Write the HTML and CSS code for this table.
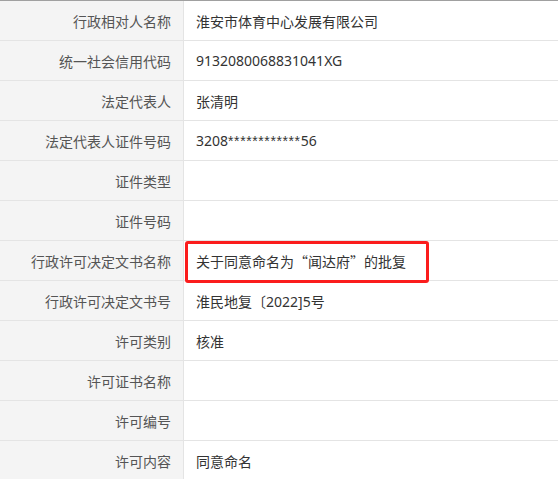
FILE: index.html
```html
<!DOCTYPE html>
<html lang="zh-CN">
<head>
<meta charset="utf-8">
<link rel="stylesheet" href="styles.css">
</head>
<body>
<div class="table">
  <div class="row"><div class="label">行政相对人名称</div><div class="value">淮安市体育中心发展有限公司</div></div>
  <div class="row"><div class="label">统一社会信用代码</div><div class="value num">9132080068831041XG</div></div>
  <div class="row"><div class="label">法定代表人</div><div class="value">张清明</div></div>
  <div class="row"><div class="label">法定代表人证件号码</div><div class="value num">3208<span class="stars">************</span>56</div></div>
  <div class="row"><div class="label">证件类型</div><div class="value"></div></div>
  <div class="row"><div class="label">证件号码</div><div class="value"></div></div>
  <div class="row"><div class="label">行政许可决定文书名称</div><div class="value">关于同意命名为“闻达府”的批复<span class="mark"></span></div></div>
  <div class="row"><div class="label">行政许可决定文书号</div><div class="value num">淮民地复〔2022]5号</div></div>
  <div class="row"><div class="label">许可类别</div><div class="value">核准</div></div>
  <div class="row"><div class="label">许可证书名称</div><div class="value"></div></div>
  <div class="row"><div class="label">许可编号</div><div class="value"></div></div>
  <div class="row"><div class="label">许可内容</div><div class="value">同意命名</div></div>
</div>
</body>
</html>
```
FILE: styles.css
```css
html, body {
  margin: 0;
  padding: 0;
  background: #fff;
}
body {
  width: 558px;
  height: 479px;
  overflow: hidden;
  font-family: "Microsoft YaHei", "Noto Sans CJK SC", "Noto Sans", sans-serif;
  font-size: 14px;
}
.table {
  border-top: 1px solid #a0a0a0;
}
.row {
  display: grid;
  grid-template-columns: 184px 1fr;
  height: 39px;
  border-bottom: 1px solid #e4e4e4;
}
.label {
  background: #f4f4f4;
  border-right: 1px solid #e4e4e4;
  color: #555;
  padding-right: 12px;
  display: flex;
  align-items: center;
  justify-content: flex-end;
}
.value {
  color: #333;
  padding-left: 12px;
  display: flex;
  align-items: center;
  position: relative;
  white-space: pre;
}
.num {
  font-family: "Noto Sans", "Noto Sans CJK SC", sans-serif;
}
.stars {
  font-family: "Liberation Sans", sans-serif;
  letter-spacing: 0.6px;
}
.mark {
  position: absolute;
  left: 1px;
  top: 0;
  width: 244px;
  height: 42px;
  box-sizing: border-box;
  border: 3px solid #fb1c1c;
  border-radius: 3px;
}
```
